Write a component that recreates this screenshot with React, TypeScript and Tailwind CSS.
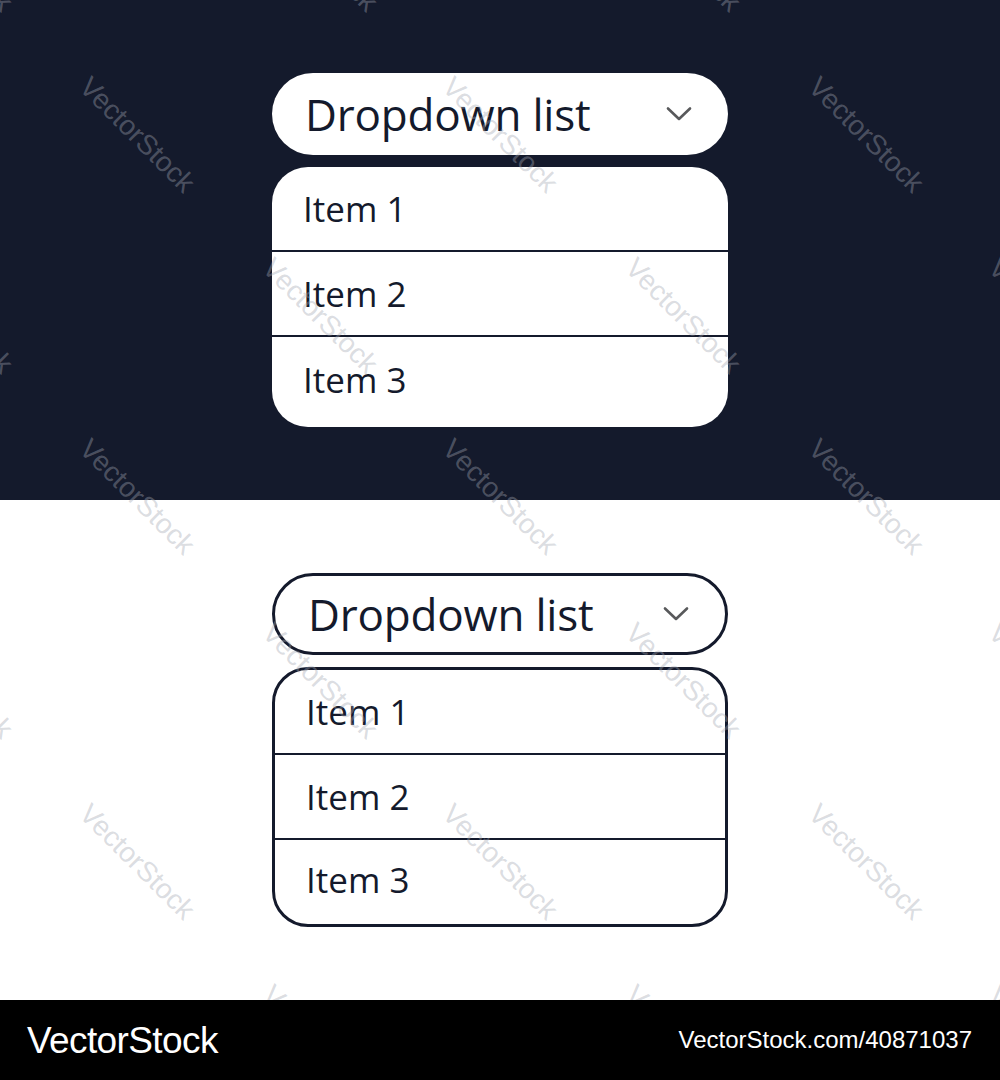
const items = ['Item 1', 'Item 2', 'Item 3'];

// watermark grid: alternating rows, offset by half a column
const marks: { x: number; y: number }[] = [];
[-46, 135, 316, 497, 681, 862, 1043].forEach((y, row) => {
  const xs = row % 2 === 1 ? [137, 500, 866] : [-45, 320, 683, 1046];
  xs.forEach((x) => marks.push({ x, y }));
});

const Chevron = () => (
  <svg width="26" height="16" viewBox="0 0 26 16" fill="none" className="text-[#58595b]">
    <polyline
      points="2,2.5 13,13 24,2.5"
      stroke="currentColor"
      strokeWidth="2.6"
      strokeLinecap="round"
      strokeLinejoin="round"
    />
  </svg>
);

const Dropdown = ({ outlined }: { outlined?: boolean }) => {
  const frame = outlined
    ? 'bg-white border-[3px] border-[#141a2c]'
    : 'bg-white';
  return (
    <div className="flex flex-col gap-[12px] w-[456px]">
      {/* Select header */}
      <div
        className={`h-[82px] rounded-full flex items-center justify-between pl-[33px] pr-[36px] ${frame}`}
      >
        <span className="text-[44px] tracking-[-0.2px] text-[#141a2c] leading-none">
          Dropdown list
        </span>
        <Chevron />
      </div>
      {/* Options */}
      <div className={`h-[260px] rounded-[36px] flex flex-col overflow-hidden ${frame}`}>
        {items.map((item, i) => (
          <div
            key={item}
            className={`flex items-center pl-[31px] ${
              i < 2 ? 'h-[85px] border-b-2 border-[#141a2c]' : 'flex-1 pb-[5px]'
            }`}
          >
            <span className="text-[35px] text-[#141a2c] leading-none">{item}</span>
          </div>
        ))}
      </div>
    </div>
  );
};

const App = () => {
  return (
    <div className="w-[1000px] h-[1080px] flex flex-col font-['Open_Sans',sans-serif]">
      <div className="relative h-[1000px] flex flex-col overflow-hidden">
        <div className="h-[500px] bg-[#141a2c] flex justify-center pt-[73px]">
          <Dropdown />
        </div>
        <div className="h-[500px] bg-white flex justify-center pt-[73px]">
          <Dropdown outlined />
        </div>
        {/* Watermark layer */}
        <div className="absolute inset-0 pointer-events-none">
          {marks.map((m, i) => (
            <span
              key={i}
              className="absolute w-[200px] -ml-[100px] -mt-[16px] text-center text-[28px] leading-[32px] rotate-45 font-['Liberation_Sans',sans-serif] text-[#a3a7b2]/40"
              style={{ left: m.x, top: m.y }}
            >
              VectorStock
            </span>
          ))}
        </div>
      </div>
      <div className="h-[80px] bg-black flex items-center justify-between pl-[27px] pr-[28px] font-['Liberation_Sans',sans-serif] text-white">
        <span className="text-[37px] tracking-[-0.6px] leading-none">VectorStock</span>
        <span className="text-[24px] leading-none">VectorStock.com/40871037</span>
      </div>
    </div>
  );
};

export default App;
